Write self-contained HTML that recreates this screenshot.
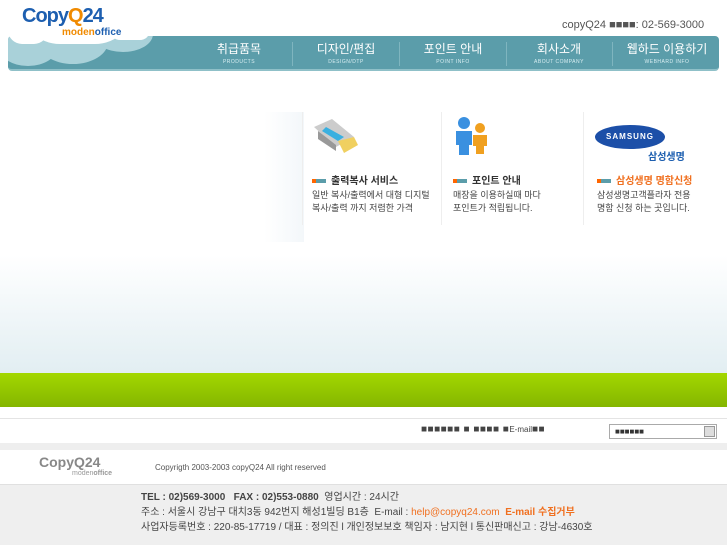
<!DOCTYPE html>
<html><head><meta charset="utf-8"><style>
*{margin:0;padding:0;box-sizing:border-box}
body{width:727px;height:545px;overflow:hidden;background:#fff;font-family:"Liberation Sans","Noto Sans CJK KR",sans-serif;position:relative}
.a{position:absolute}
.nav{left:8px;top:36px;width:711px;height:35px;background:#5b9daa;border-radius:4px;border-bottom:2px solid #8fc0c8;overflow:hidden}
.mi{top:42px;width:106px;text-align:center;color:#fff}
.mi b{display:block;font-size:12px;font-weight:normal;line-height:14px}
.mi i{display:block;font-size:5px;font-style:normal;margin-top:3px;letter-spacing:.5px;color:#d8eef2}
.sep{top:42px;width:1px;height:24px;background:#7fb5bf}
.t{font-size:9px;color:#444;line-height:13px}
.h{font-size:10px;font-weight:bold;color:#333}
.bar{display:inline-block;width:14px;height:4px;background:linear-gradient(90deg,#f60 0 4px,#5b9daa 4px);vertical-align:middle;margin-right:5px}
.c{position:absolute;border-radius:50%;background:#a9d1d9}
</style></head><body>
<div class="a" style="left:0;top:255px;width:727px;height:118px;background:linear-gradient(#fff,#e2eef2)"></div>
<div class="a" style="left:0;top:373px;width:727px;height:34px;background:linear-gradient(#a3d800,#84b600)"></div>
<div class="a" style="left:0;top:418px;width:727px;height:1px;background:#e4e4e4"></div>
<div class="a" style="left:0;top:443px;width:727px;height:7px;background:#eee"></div>
<div class="a" style="left:0;top:484px;width:727px;height:61px;background:#efefef;border-top:1px solid #e0e0e0"></div>
<div class="a nav">
 <div class="c" style="left:-10px;top:-10px;width:60px;height:40px"></div>
 <div class="c" style="left:30px;top:-16px;width:70px;height:44px"></div>
 <div class="c" style="left:85px;top:-20px;width:60px;height:36px"></div>
</div>
<div class="a" style="left:20px;top:0;width:115px;height:44px;background:#fff;border-radius:0 0 40px 40px"></div>
<div class="a" style="left:8px;top:30px;width:40px;height:14px;background:#fff;border-radius:0 0 20px 20px"></div>
<div class="a" style="left:110px;top:30px;width:40px;height:10px;background:#fff;border-radius:0 0 20px 20px"></div>
<div class="a" style="left:22px;top:5px;font-size:20px;font-weight:bold;color:#1d5fb0;letter-spacing:-1px">Copy<span style="color:#f08a00">Q</span>24</div>
<div class="a" style="left:62px;top:27px;font-size:10px;font-weight:bold;color:#f08a00">moden<span style="color:#1d5fb0">office</span></div>
<div class="a" style="left:562px;top:19px;font-size:11px;color:#555">copyQ24 ■■■■: 02-569-3000</div>
<div class="a mi" style="left:186px"><b>취급품목</b><i>PRODUCTS</i></div>
<div class="a sep" style="left:292px"></div>
<div class="a mi" style="left:293px"><b>디자인/편집</b><i>DESIGN/DTP</i></div>
<div class="a sep" style="left:399px"></div>
<div class="a mi" style="left:400px"><b>포인트 안내</b><i>POINT INFO</i></div>
<div class="a sep" style="left:506px"></div>
<div class="a mi" style="left:506px"><b>회사소개</b><i>ABOUT COMPANY</i></div>
<div class="a sep" style="left:612px"></div>
<div class="a mi" style="left:614px"><b>웹하드 이용하기</b><i>WEBHARD INFO</i></div>
<div class="a" style="left:264px;top:112px;width:40px;height:130px;background:linear-gradient(90deg,#fff,#f3f7fa)"></div>
<div class="a" style="left:302px;top:112px;width:1px;height:113px;background:#eee"></div>
<div class="a" style="left:441px;top:112px;width:1px;height:113px;background:#eee"></div>
<div class="a" style="left:583px;top:112px;width:1px;height:113px;background:#eee"></div>
<svg class="a" style="left:310px;top:115px" width="50" height="45"><path d="M4 12 L22 4 L44 22 L26 32 Z" fill="#ccc"/><path d="M8 16 L26 30 L26 36 L8 24Z" fill="#999"/><path d="M16 12 L34 22 L28 26 L12 16Z" fill="#3ab0e0"/><path d="M28 26 L44 22 L48 30 L34 38Z" fill="#f0d060"/></svg>
<svg class="a" style="left:452px;top:115px" width="40" height="42"><circle cx="12" cy="8" r="6" fill="#3a90e0"/><path d="M4 16h16v14h-3v10h-10v-10h-3z" fill="#3a90e0"/><circle cx="28" cy="13" r="5" fill="#f0a020"/><path d="M21 20h14v11h-3v8h-8v-8h-3z" fill="#f0a020"/></svg>
<div class="a" style="left:595px;top:125px;width:70px;height:24px;border-radius:50%;background:#1c4fa8;color:#fff;font-size:8px;font-weight:bold;text-align:center;line-height:24px;letter-spacing:1px">SAMSUNG</div>
<div class="a" style="left:648px;top:148px;font-size:10px;color:#1d5fb0;font-weight:bold">삼성생명</div>
<div class="a" style="left:312px;top:172px"><div class="h"><span class="bar"></span>출력복사 서비스</div><div class="t" style="margin-top:2px">일반 복사/출력에서 대형 디지털<br>복사/출력 까지 저렴한 가격</div></div>
<div class="a" style="left:453px;top:172px"><div class="h"><span class="bar"></span>포인트 안내</div><div class="t" style="margin-top:2px">매장을 이용하실때 마다<br>포인트가 적립됩니다.</div></div>
<div class="a" style="left:597px;top:172px"><div class="h" style="color:#f07020"><span class="bar"></span>삼성생명 명함신청</div><div class="t" style="margin-top:2px">삼성생명고객플라자 전용<br>명함 신청 하는 곳입니다.</div></div>
<div class="a" style="left:421px;top:424px;font-size:10px;color:#444;letter-spacing:.5px">■■■■■■ ■ ■■■■ ■<span style="font-size:8px;letter-spacing:0">E-mail</span>■■</div>
<div class="a" style="left:609px;top:424px;width:108px;height:15px;border:1px solid #aaa;font-size:8px;color:#333;padding-left:5px;line-height:13px">■■■■■■<span style="position:absolute;right:1px;top:1px;width:11px;height:11px;background:#ddd;border:1px solid #999"></span></div>
<div class="a" style="left:39px;top:454px;font-size:14px;font-weight:bold;color:#888">Copy<span>Q</span>24</div>
<div class="a" style="left:72px;top:470px;font-size:7px;color:#999">moden<b>office</b></div>
<div class="a" style="left:155px;top:463px;font-size:8px;color:#555">Copyrigth 2003-2003 copyQ24 All right reserved</div>
<div class="a" style="left:141px;top:490px;font-size:10px;line-height:15px;color:#444"><b>TEL : 02)569-3000 &nbsp; FAX : 02)553-0880</b> &nbsp;영업시간 : 24시간<br>주소 : 서울시 강남구 대치3동 942번지 해성1빌딩 B1층 &nbsp;E-mail : <span style="color:#f07020">help@copyq24.com</span> &nbsp;<b style="color:#f07020">E-mail 수집거부</b><br>사업자등록번호 : 220-85-17719 / 대표 : 정의진 l 개인정보보호 책임자 : 남지현 l 통신판매신고 : 강남-4630호</div>
</body></html>
